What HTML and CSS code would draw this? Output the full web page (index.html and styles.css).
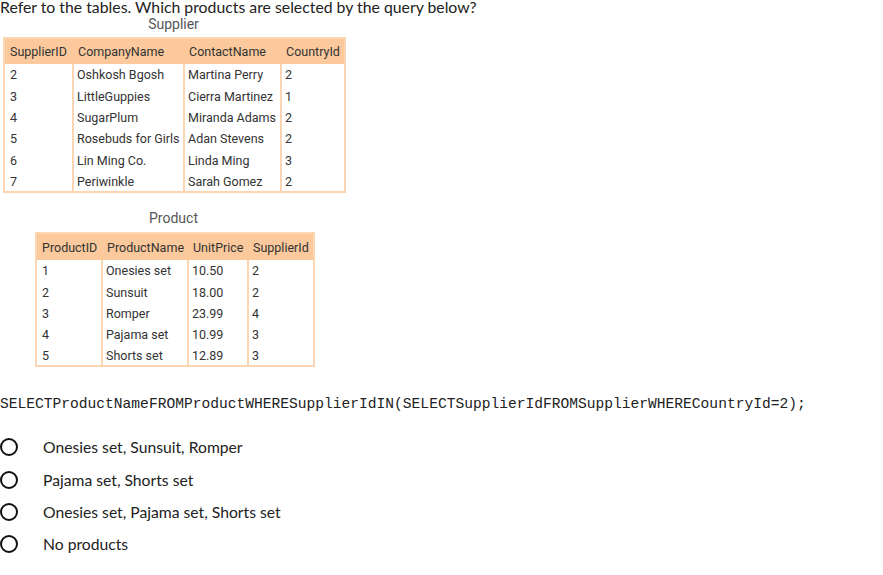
FILE: index.html
```html
<!DOCTYPE html>
<html lang="en">
<head>
  <meta charset="UTF-8" />
  <title>Quiz</title>
  <link rel="stylesheet" href="styles.css">
</head>
<body>
  <h1 class="question">Refer to the tables. Which products are selected by the query below?</h1>

  <div class="tables">
    <div class="caption">Supplier</div>
    <table class="data supplier">
      <thead>
        <tr><th>SupplierID</th><th>CompanyName</th><th>ContactName</th><th>CountryId</th></tr>
      </thead>
      <tbody>
        <tr><td>2</td><td>Oshkosh Bgosh</td><td>Martina Perry</td><td>2</td></tr>
        <tr><td>3</td><td>LittleGuppies</td><td>Cierra Martinez</td><td>1</td></tr>
        <tr><td>4</td><td>SugarPlum</td><td>Miranda Adams</td><td>2</td></tr>
        <tr><td>5</td><td>Rosebuds for Girls</td><td>Adan Stevens</td><td>2</td></tr>
        <tr><td>6</td><td>Lin Ming Co.</td><td>Linda Ming</td><td>3</td></tr>
        <tr><td>7</td><td>Periwinkle</td><td>Sarah Gomez</td><td>2</td></tr>
      </tbody>
    </table>

    <div class="caption product-caption">Product</div>
    <table class="data product">
      <thead>
        <tr><th>ProductID</th><th>ProductName</th><th>UnitPrice</th><th>SupplierId</th></tr>
      </thead>
      <tbody>
        <tr><td>1</td><td>Onesies set</td><td>10.50</td><td>2</td></tr>
        <tr><td>2</td><td>Sunsuit</td><td>18.00</td><td>2</td></tr>
        <tr><td>3</td><td>Romper</td><td>23.99</td><td>4</td></tr>
        <tr><td>4</td><td>Pajama set</td><td>10.99</td><td>3</td></tr>
        <tr><td>5</td><td>Shorts set</td><td>12.89</td><td>3</td></tr>
      </tbody>
    </table>
  </div>

  <pre class="query">SELECTProductNameFROMProductWHERESupplierIdIN(SELECTSupplierIdFROMSupplierWHERECountryId=2);</pre>

  <ul class="options">
    <li><span class="radio"></span>Onesies set, Sunsuit, Romper</li>
    <li><span class="radio"></span>Pajama set, Shorts set</li>
    <li><span class="radio"></span>Onesies set, Pajama set, Shorts set</li>
    <li><span class="radio"></span>No products</li>
  </ul>
</body>
</html>
```

FILE: styles.css
```css
* { box-sizing: border-box; margin: 0; padding: 0; }
body {
  background: #fff;
  color: #222;
  font-family: "Lato", sans-serif;
}
.question {
  font-size: 15.8px;
  font-weight: 400;
  line-height: 16px;
  margin-top: -1px;
  color: #222;
}
.tables {
  width: 347px;
  text-align: center;
}
.caption {
  font-family: "Roboto", sans-serif;
  font-size: 14px;
  color: #555;
  line-height: 16px;
  margin-top: 1px;
  height: 21px;
}
.product-caption {
  margin-top: 17px;
  height: 22px;
}
table.data {
  border-collapse: collapse;
  font-family: "Roboto", sans-serif;
  font-size: 12.5px;
  color: #333;
  text-align: left;
  table-layout: fixed;
  border: 2px solid #fcd6b2;
}
.data th {
  background: #fbc99b;
  font-weight: 400;
  height: 26px;
  padding: 0 5px;
  white-space: nowrap;
}
.data td {
  height: 21.4px;
  padding: 0 3px;
  white-space: nowrap;
  border-left: 2px solid #fcd6b2;
  vertical-align: middle;
}
.data td:first-child { border-left: none; padding-left: 5px; }
table.supplier { width: 341px; margin-left: 3px; }
.supplier th:nth-child(1) { width: 69px; }
.supplier th:nth-child(2) { width: 111px; }
.supplier th:nth-child(3) { width: 97px; }
.supplier th:nth-child(4) { width: 64px; }
table.product {
  width: 278px;
  margin-left: 35px;
}
.product th { height: 27px; }
.product td { height: 21.2px; }
.product th:nth-child(1) { width: 66px; }
.product th:nth-child(2) { width: 86px; }
.product th:nth-child(3) { width: 60px; }
.product th:nth-child(4) { width: 66px; }
.query {
  font-family: "Liberation Mono", monospace;
  font-size: 14.6px;
  color: #222;
  margin-top: 28px;
  line-height: 18px;
}
.options {
  list-style: none;
  margin-top: 18px;
}
.options li {
  display: flex;
  align-items: center;
  height: 32.3px;
  font-size: 15.7px;
  color: #222;
}
.radio {
  display: inline-block;
  width: 18px;
  height: 18px;
  border: 2.5px solid #111;
  border-radius: 50%;
  margin-right: 25px;
}
```
